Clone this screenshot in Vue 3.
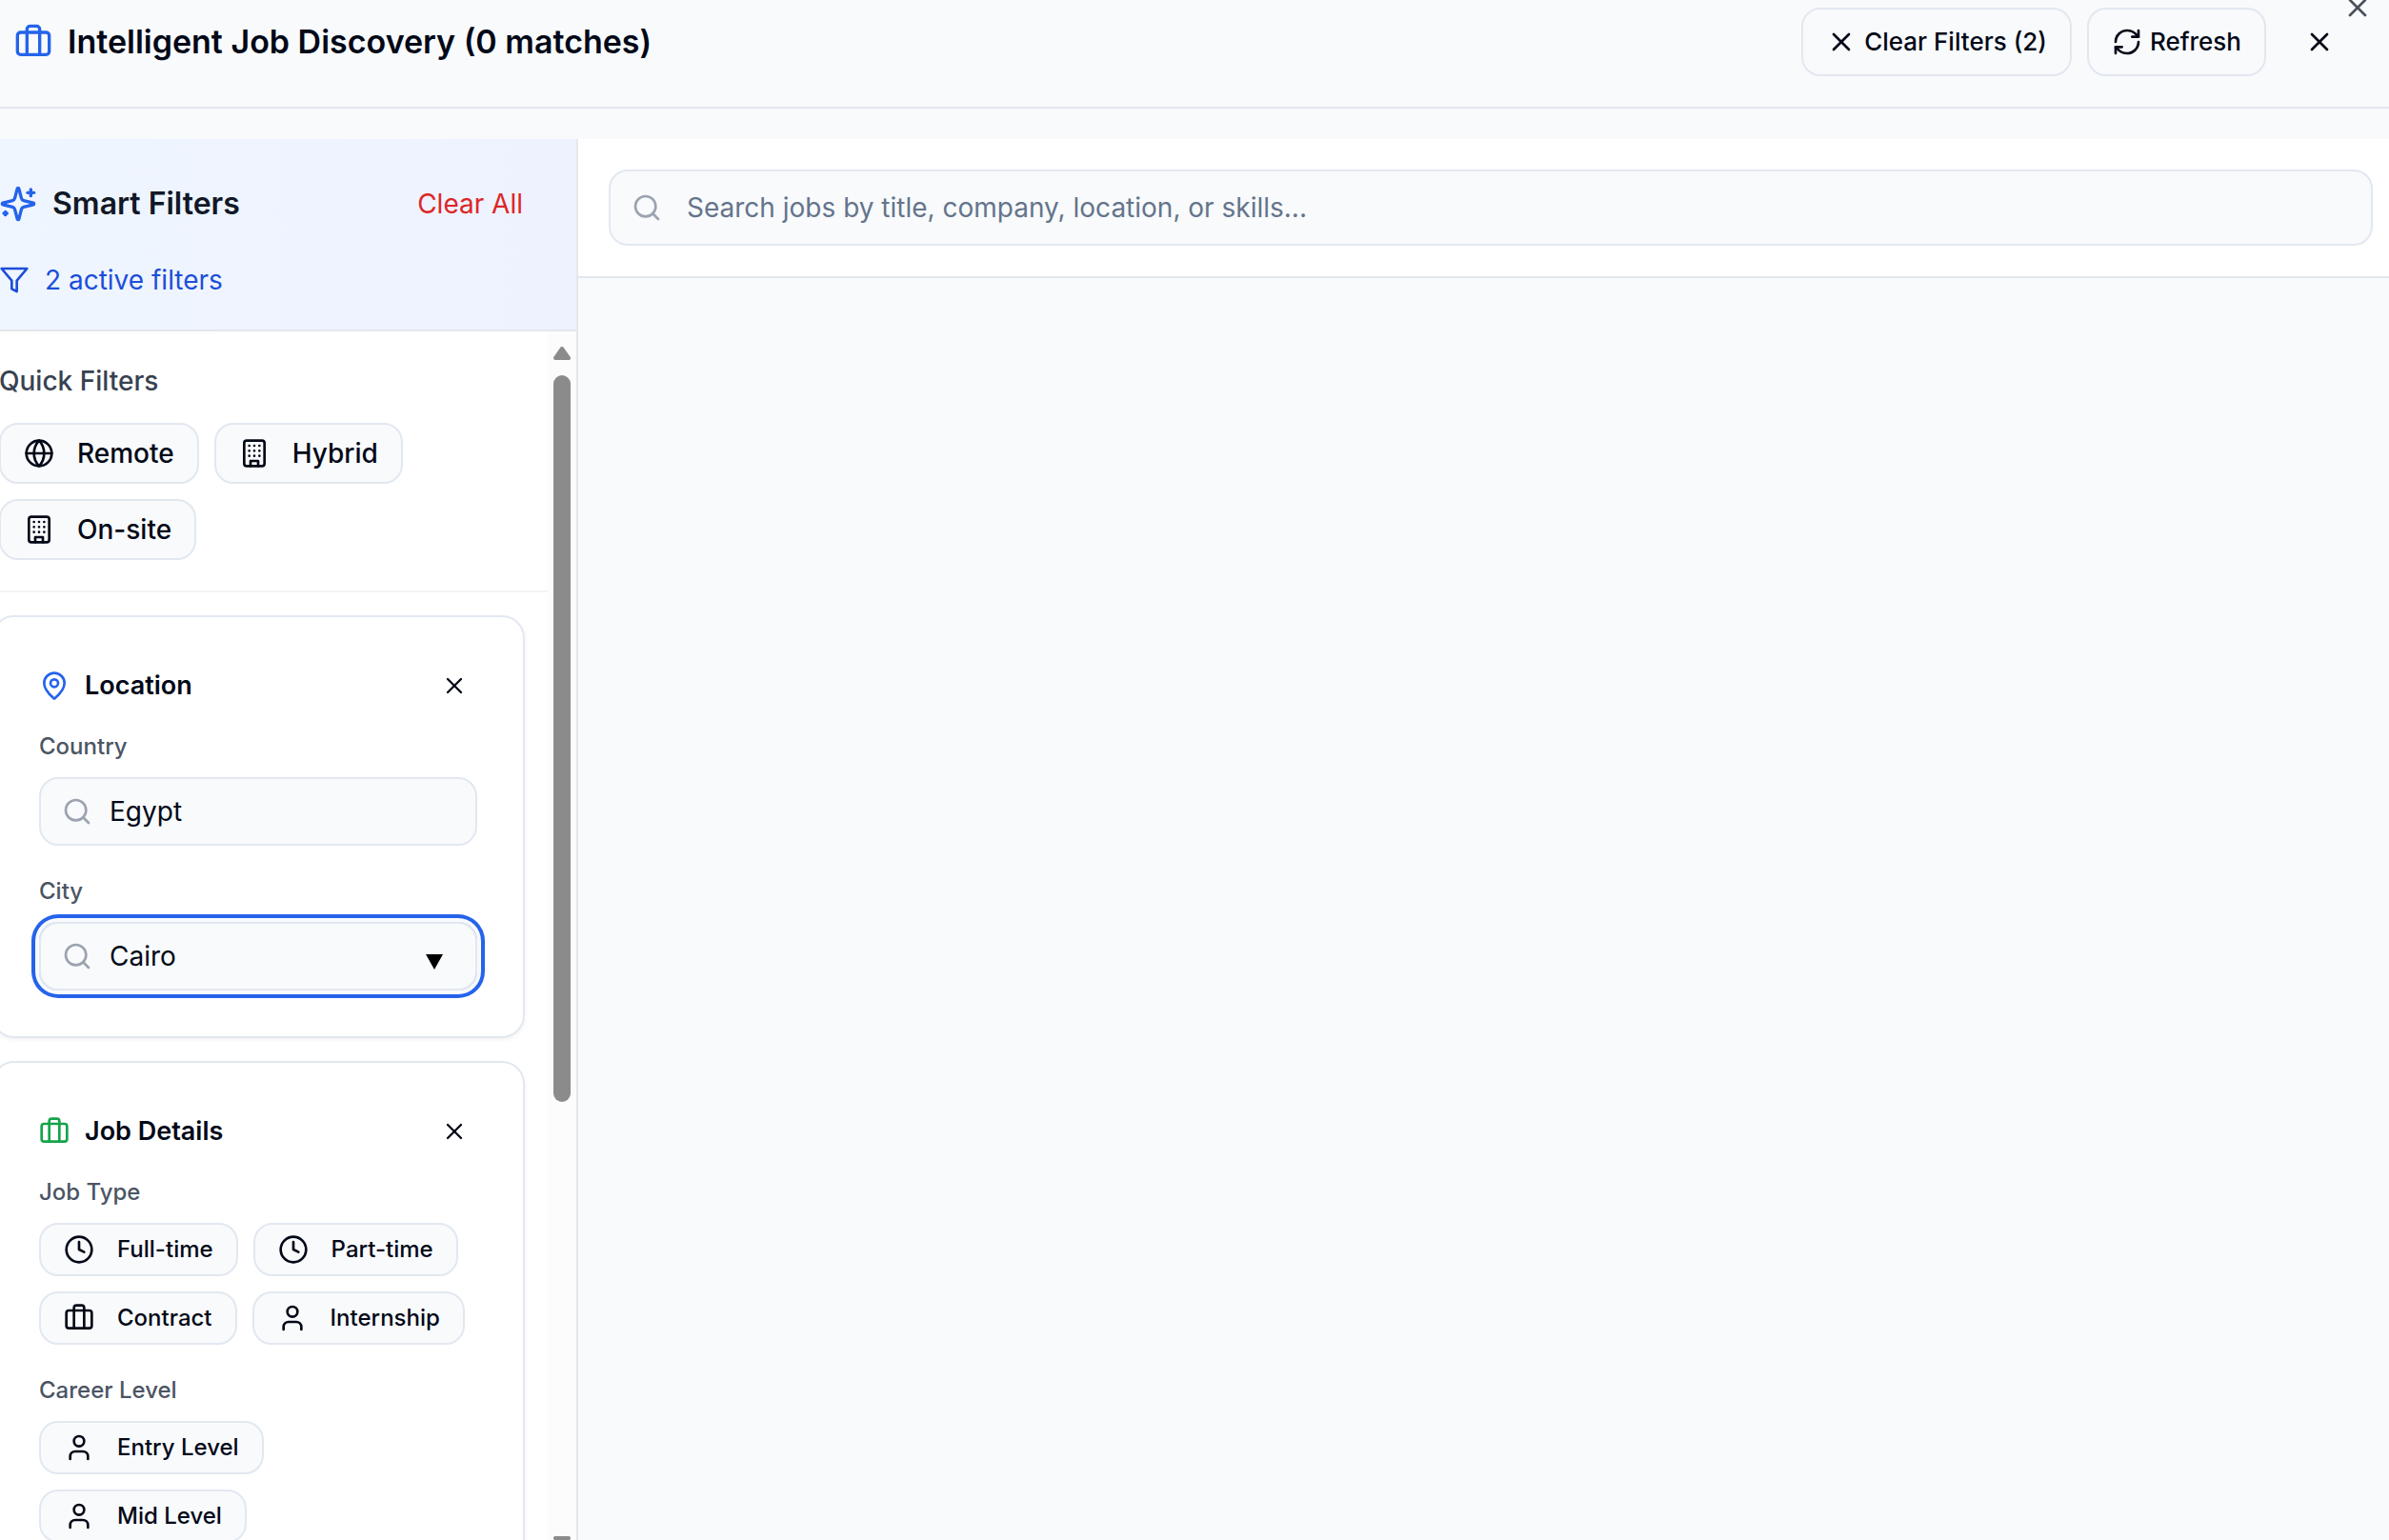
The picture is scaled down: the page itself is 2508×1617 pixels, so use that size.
<script setup>
import { ref, h } from 'vue'

const search = ref('')
const country = ref('Egypt')
const city = ref('Cairo')

const quickFilters = [
  { label: 'Remote', icon: 'globe' },
  { label: 'Hybrid', icon: 'building' },
  { label: 'On-site', icon: 'building' },
]
const jobTypes = [
  { label: 'Full-time', icon: 'clock' },
  { label: 'Part-time', icon: 'clock' },
  { label: 'Contract', icon: 'briefcase' },
  { label: 'Internship', icon: 'user' },
]
const careerLevels = [
  { label: 'Entry Level', icon: 'user' },
  { label: 'Mid Level', icon: 'user' },
]

const shapes = {
  x: [['path', { d: 'M18 6 6 18' }], ['path', { d: 'm6 6 12 12' }]],
  search: [['circle', { cx: 11, cy: 11, r: 8 }], ['path', { d: 'm21 21-4.3-4.3' }]],
  filter: [['polygon', { points: '22 3 2 3 10 12.46 10 19 14 21 14 12.46 22 3' }]],
  refresh: [
    ['path', { d: 'M3 12a9 9 0 0 1 9-9 9.75 9.75 0 0 1 6.74 2.74L21 8' }],
    ['path', { d: 'M21 3v5h-5' }],
    ['path', { d: 'M21 12a9 9 0 0 1-9 9 9.75 9.75 0 0 1-6.74-2.74L3 16' }],
    ['path', { d: 'M8 16H3v5' }],
  ],
  sparkles: [
    ['path', { d: 'M9.937 15.5A2 2 0 0 0 8.5 14.063l-6.135-1.582a.5.5 0 0 1 0-.962L8.5 9.936A2 2 0 0 0 9.937 8.5l1.582-6.135a.5.5 0 0 1 .963 0L14.063 8.5A2 2 0 0 0 15.5 9.937l6.135 1.581a.5.5 0 0 1 0 .964L15.5 14.063a2 2 0 0 0-1.437 1.437l-1.582 6.135a.5.5 0 0 1-.963 0z' }],
    ['path', { d: 'M20 3v4' }],
    ['path', { d: 'M22 5h-4' }],
    ['path', { d: 'M4 17v2' }],
    ['path', { d: 'M5 18H3' }],
  ],
  briefcase: [
    ['path', { d: 'M16 20V4a2 2 0 0 0-2-2h-4a2 2 0 0 0-2 2v16' }],
    ['rect', { width: 20, height: 14, x: 2, y: 6, rx: 2 }],
  ],
  globe: [
    ['circle', { cx: 12, cy: 12, r: 10 }],
    ['path', { d: 'M12 2a14.5 14.5 0 0 0 0 20 14.5 14.5 0 0 0 0-20' }],
    ['path', { d: 'M2 12h20' }],
  ],
  building: [
    ['rect', { width: 16, height: 20, x: 4, y: 2, rx: 2 }],
    ['path', { d: 'M9 22v-4h6v4M8 6h.01M16 6h.01M12 6h.01M12 10h.01M12 14h.01M16 10h.01M16 14h.01M8 10h.01M8 14h.01' }],
  ],
  pin: [
    ['path', { d: 'M20 10c0 4.993-5.539 10.193-7.399 11.799a1 1 0 0 1-1.202 0C9.539 20.193 4 14.993 4 10a8 8 0 0 1 16 0' }],
    ['circle', { cx: 12, cy: 10, r: 3 }],
  ],
  clock: [['circle', { cx: 12, cy: 12, r: 10 }], ['path', { d: 'M12 6v6l4 2' }]],
  user: [
    ['path', { d: 'M19 21v-2a4 4 0 0 0-4-4H9a4 4 0 0 0-4 4v2' }],
    ['circle', { cx: 12, cy: 7, r: 4 }],
  ],
}

const Icon = (props) =>
  h(
    'svg',
    {
      width: props.size,
      height: props.size,
      viewBox: '0 0 24 24',
      fill: 'none',
      stroke: 'currentColor',
      'stroke-width': 2,
      'stroke-linecap': 'round',
      'stroke-linejoin': 'round',
      'aria-hidden': 'true',
    },
    shapes[props.name].map(([tag, attrs]) => h(tag, attrs))
  )
Icon.props = { name: String, size: { type: Number, default: 32 } }
</script>

<template>
  <div class="dialog">
    <header class="topbar">
      <h1 class="title"><Icon name="briefcase" :size="40" class="blue" />Intelligent Job Discovery (0 matches)</h1>
      <div class="actions">
        <button type="button" class="btn"><Icon name="x" />Clear Filters (2)</button>
        <button type="button" class="btn"><Icon name="refresh" />Refresh</button>
        <button type="button" class="btn ghost" aria-label="Close job list"><Icon name="x" /></button>
      </div>
      <button type="button" class="dismiss" aria-label="Close dialog"><Icon name="x" /></button>
    </header>

    <div class="workspace">
      <aside class="sidebar">
        <div class="smart">
          <div class="smart-row">
            <h2 class="smart-title"><Icon name="sparkles" :size="40" class="blue" />Smart Filters</h2>
            <button type="button" class="clear-all">Clear All</button>
          </div>
          <p class="active-count"><Icon name="filter" />2 active filters</p>
        </div>

        <div class="scroll-area">
          <div class="filters">
            <section class="quick">
              <h3 class="quick-title">Quick Filters</h3>
              <div class="chips">
                <button v-for="f in quickFilters" :key="f.label" type="button" class="chip">
                  <Icon :name="f.icon" />{{ f.label }}
                </button>
              </div>
            </section>

            <div class="cards">
              <section class="card">
                <div class="card-head">
                  <h3 class="card-title"><Icon name="pin" class="blue" />Location</h3>
                  <button type="button" class="card-clear" aria-label="Clear location"><Icon name="x" :size="28" /></button>
                </div>
                <div class="group">
                  <label class="label" for="country">Country</label>
                  <div class="field">
                    <Icon name="search" class="field-icon" />
                    <input id="country" v-model="country" type="text" />
                  </div>
                </div>
                <div class="group">
                  <label class="label" for="city">City</label>
                  <div class="field current">
                    <Icon name="search" class="field-icon" />
                    <input id="city" v-model="city" type="text" />
                    <svg class="caret" width="18" height="16" viewBox="0 0 18 16" aria-hidden="true"><path d="M0 0H18L9 16Z" /></svg>
                  </div>
                </div>
              </section>

              <section class="card">
                <div class="card-head">
                  <h3 class="card-title"><Icon name="briefcase" class="green" />Job Details</h3>
                  <button type="button" class="card-clear" aria-label="Clear job details"><Icon name="x" :size="28" /></button>
                </div>
                <div class="group" role="group" aria-labelledby="job-type">
                  <h4 id="job-type" class="label">Job Type</h4>
                  <div class="chips">
                    <button v-for="t in jobTypes" :key="t.label" type="button" class="chip small">
                      <Icon :name="t.icon" />{{ t.label }}
                    </button>
                  </div>
                </div>
                <div class="group" role="group" aria-labelledby="career-level">
                  <h4 id="career-level" class="label">Career Level</h4>
                  <div class="chips">
                    <button v-for="l in careerLevels" :key="l.label" type="button" class="chip small">
                      <Icon :name="l.icon" />{{ l.label }}
                    </button>
                  </div>
                </div>
              </section>
            </div>
          </div>

          <div class="scrollbar" aria-hidden="true">
            <svg width="18" height="14" viewBox="0 0 18 14"><path d="M9 2 16 12H2Z" /></svg>
            <div class="thumb"></div>
            <svg class="down" width="18" height="14" viewBox="0 0 18 14"><path d="M2 2H16L9 12Z" /></svg>
          </div>
        </div>
      </aside>

      <main class="results">
        <div class="search-panel">
          <div class="field large">
            <Icon name="search" class="field-icon" />
            <input v-model="search" type="text" aria-label="Search jobs" placeholder="Search jobs by title, company, location, or skills..." />
          </div>
        </div>
      </main>
    </div>
  </div>
</template>

<style>
body {
  margin: 0;
  overflow: hidden;
}
</style>

<style scoped>
.dialog {
  position: relative;
  display: flex;
  flex-direction: column;
  height: 100vh;
  overflow: hidden;
  background: #f8fafc;
  color: #020817;
  font-family: Inter, "Liberation Sans", sans-serif;
  font-size: 28px;
  line-height: 40px;
}
.dialog *,
.dialog *::before {
  box-sizing: border-box;
}
h1, h2, h3, h4, p {
  margin: 0;
}
svg {
  display: block;
  flex: none;
}
button {
  display: flex;
  align-items: center;
  padding: 0;
  border: 0;
  background: none;
  color: inherit;
  font: inherit;
  white-space: nowrap;
  cursor: pointer;
}
.blue { color: #2563eb; }
.green { color: #16a34a; }

.topbar {
  display: flex;
  flex: none;
  align-items: center;
  justify-content: space-between;
  padding: 8px 33px 32px 15px;
  border-bottom: 2px solid #e2e8f0;
}
.title {
  display: flex;
  align-items: center;
  gap: 16px;
  font-size: 34px;
  font-weight: 600;
}
.actions {
  display: flex;
  gap: 16px;
}
.btn {
  gap: 8px;
  height: 72px;
  padding: 0 24px;
  border: 2px solid #e2e8f0;
  border-radius: 20px;
  font-size: 26px;
  font-weight: 500;
}
.btn.ghost {
  border: 0;
}
.dismiss {
  position: absolute;
  top: -8px;
  right: 17px;
  opacity: 0.7;
}

.workspace {
  display: flex;
  flex: 1;
  min-height: 0;
  margin-top: 32px;
  margin-bottom: -26px;
}
.sidebar {
  display: flex;
  flex: none;
  flex-direction: column;
  width: 640px;
  margin-left: -33px;
  border-right: 2px solid #e5e7eb;
  background: #fff;
}
.smart {
  display: flex;
  flex: none;
  flex-direction: column;
  gap: 24px;
  padding: 32px;
  border-bottom: 2px solid #e5e7eb;
  background: linear-gradient(to right, #eff6ff, #eef2ff);
}
.smart-row {
  display: flex;
  align-items: center;
  justify-content: space-between;
  height: 72px;
}
.smart-title {
  display: flex;
  align-items: center;
  gap: 16px;
  color: #111827;
  font-size: 32px;
  font-weight: 600;
}
.clear-all {
  padding: 0 24px;
  color: #dc2626;
}
.active-count {
  display: flex;
  align-items: center;
  gap: 16px;
  color: #1d4ed8;
}
.scroll-area {
  display: flex;
  flex: 1;
  min-height: 0;
}
.filters {
  flex: 1;
  min-width: 0;
  overflow: hidden;
}
.quick {
  padding: 32px;
  border-bottom: 2px solid #f3f4f6;
}
.quick-title {
  margin-bottom: 24px;
  color: #374151;
  font-size: 28px;
  font-weight: 500;
}
.chips {
  display: flex;
  flex-wrap: wrap;
  gap: 16px;
}
.chip {
  gap: 24px;
  height: 64px;
  padding: 0 24px;
  border: 2px solid #e2e8f0;
  border-radius: 20px;
  background: #f8fafc;
  font-weight: 500;
}
.chip.small {
  height: 56px;
  font-size: 24px;
}
.cards {
  display: flex;
  flex-direction: column;
  gap: 24px;
  padding: 24px;
}
.card {
  padding: 48px;
  border: 2px solid #e2e8f0;
  border-radius: 24px;
  box-shadow: 0 2px 4px rgba(0, 0, 0, 0.05);
}
.card-head {
  display: flex;
  align-items: center;
  justify-content: space-between;
  height: 48px;
  margin-bottom: 24px;
}
.card-title {
  display: flex;
  align-items: center;
  gap: 16px;
  font-size: 27px;
  font-weight: 600;
}
.card-clear {
  justify-content: center;
  width: 48px;
  height: 48px;
}
.group + .group {
  margin-top: 32px;
}
.label {
  display: block;
  margin-bottom: 16px;
  color: #4b5563;
  font-size: 24px;
  font-weight: 500;
  line-height: 32px;
}
.field {
  position: relative;
  height: 72px;
  border-radius: 20px;
}
.field.large {
  height: 80px;
}
.field input {
  width: 100%;
  height: 100%;
  padding: 0 24px 0 72px;
  border: 2px solid #e2e8f0;
  border-radius: 20px;
  outline: none;
  background: #f8fafc;
  color: inherit;
  font: inherit;
}
.field.large input {
  padding-left: 80px;
}
.field input::placeholder {
  color: #64748b;
  opacity: 1;
}
.field.current {
  box-shadow: 0 0 0 4px #f8fafc, 0 0 0 8px #2563eb;
}
.field-icon {
  position: absolute;
  top: 50%;
  left: 24px;
  margin-top: -16px;
  color: #9ca3af;
}
.caret {
  position: absolute;
  top: 34px;
  right: 36px;
}
.scrollbar {
  display: flex;
  flex: none;
  flex-direction: column;
  align-items: center;
  gap: 16px;
  width: 30px;
  padding: 16px 0;
  background: #fcfcfc;
}
.scrollbar path {
  fill: #8b8b8b;
  stroke: #8b8b8b;
  stroke-width: 4;
  stroke-linejoin: round;
}
.thumb {
  width: 18px;
  height: 763px;
  border-radius: 9px;
  background: #8b8b8b;
}
.down {
  margin-top: auto;
}
.results {
  flex: 1;
  min-width: 0;
}
.search-panel {
  padding: 32px 17px 32px 32px;
  border-bottom: 2px solid #e2e8f0;
  background: #fff;
}
</style>
